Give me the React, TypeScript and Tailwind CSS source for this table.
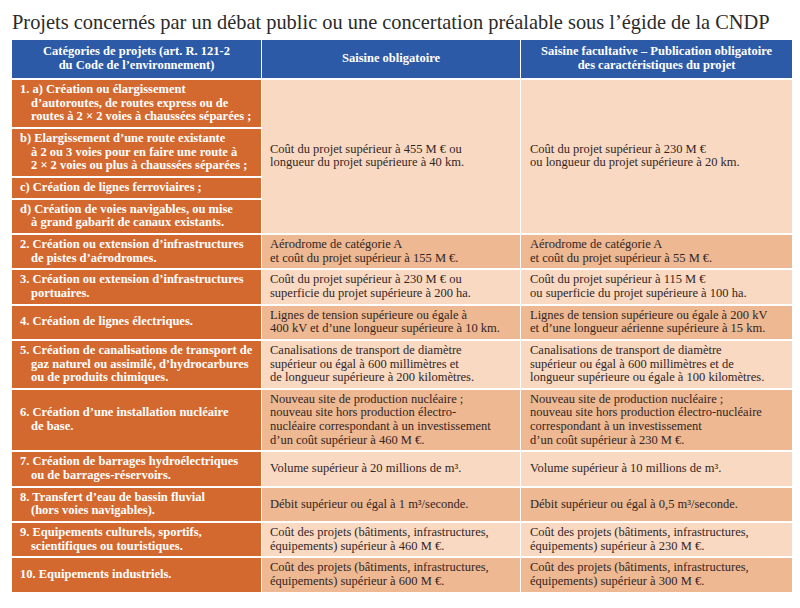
const font = { fontFamily: '"Liberation Serif", "DejaVu Serif", serif' };

type Row = { cat: string[]; oblig: string[]; facult: string[]; dark: boolean };

const subRows: string[][] = [
  ["1. a) Création ou élargissement", "d’autoroutes, de routes express ou de", "routes à 2 × 2 voies à chaussées séparées ;"],
  ["b) Elargissement d’une route existante", "à 2 ou 3 voies pour en faire une route à", "2 × 2 voies ou plus à chaussées séparées ;"],
  ["c) Création de lignes ferroviaires ;"],
  ["d) Création de voies navigables, ou mise", "à grand gabarit de canaux existants."],
];

const rows: Row[] = [
  {
    cat: ["2. Création ou extension d’infrastructures", "de pistes d’aérodromes."],
    oblig: ["Aérodrome de catégorie A", "et coût du projet supérieur à 155 M €."],
    facult: ["Aérodrome de catégorie A", "et coût du projet supérieur à 55 M €."],
    dark: true,
  },
  {
    cat: ["3. Création ou extension d’infrastructures", "portuaires."],
    oblig: ["Coût du projet supérieur à 230 M € ou", "superficie du projet supérieure à 200 ha."],
    facult: ["Coût du projet supérieur à 115 M €", "ou superficie du projet supérieure à 100 ha."],
    dark: false,
  },
  {
    cat: ["4. Création de lignes électriques."],
    oblig: ["Lignes de tension supérieure ou égale à", "400 kV et d’une longueur supérieure à 10 km."],
    facult: ["Lignes de tension supérieure ou égale à 200 kV", "et d’une longueur aérienne supérieure à 15 km."],
    dark: true,
  },
  {
    cat: ["5. Création de canalisations de transport de", "gaz naturel ou assimilé, d’hydrocarbures", "ou de produits chimiques."],
    oblig: ["Canalisations de transport de diamètre", "supérieur ou égal à 600 millimètres et", "de longueur supérieure à 200 kilomètres."],
    facult: ["Canalisations de transport de diamètre", "supérieur ou égal à 600 millimètres et de", "longueur supérieure ou égale à 100 kilomètres."],
    dark: false,
  },
  {
    cat: ["6. Création d’une installation nucléaire", "de base."],
    oblig: ["Nouveau site de production nucléaire ;", "nouveau site hors production électro-", "nucléaire correspondant à un investissement", "d’un coût supérieur à 460 M €."],
    facult: ["Nouveau site de production nucléaire ;", "nouveau site hors production électro-nucléaire", "correspondant à un investissement", "d’un coût supérieur à 230 M €."],
    dark: true,
  },
  {
    cat: ["7. Création de barrages hydroélectriques", "ou de barrages-réservoirs."],
    oblig: ["Volume supérieur à 20 millions de m³."],
    facult: ["Volume supérieur à 10 millions de m³."],
    dark: false,
  },
  {
    cat: ["8. Transfert d’eau de bassin fluvial", "(hors voies navigables)."],
    oblig: ["Débit supérieur ou égal à 1 m³/seconde."],
    facult: ["Débit supérieur ou égal à 0,5 m³/seconde."],
    dark: true,
  },
  {
    cat: ["9. Equipements culturels, sportifs,", "scientifiques ou touristiques."],
    oblig: ["Coût des projets (bâtiments, infrastructures,", "équipements) supérieur à 460 M €."],
    facult: ["Coût des projets (bâtiments, infrastructures,", "équipements) supérieur à 230 M €."],
    dark: false,
  },
  {
    cat: ["10. Equipements industriels."],
    oblig: ["Coût des projets (bâtiments, infrastructures,", "équipements) supérieur à 600 M €."],
    facult: ["Coût des projets (bâtiments, infrastructures,", "équipements) supérieur à 300 M €."],
    dark: true,
  },
];

function CatCell({ lines }: { lines: string[] }) {
  return (
    <div className="flex flex-col justify-center bg-[#d4692f] py-[3px] pl-[8px] pr-1 font-bold text-white">
      {lines.map((l, i) => (
        <div key={i} className={i > 0 ? "whitespace-nowrap pl-[11px]" : "whitespace-nowrap"}>
          {l}
        </div>
      ))}
    </div>
  );
}

function Cell({ lines, dark, pad = "pl-[8px]" }: { lines: string[]; dark: boolean; pad?: string }) {
  return (
    <div
      className={`flex flex-col justify-center py-[3px] pr-1 text-[#33261f] ${pad} ${
        dark ? "bg-[#edb892]" : "bg-[#f9d9c2]"
      }`}
    >
      {lines.map((l, i) => (
        <div key={i} className="whitespace-nowrap">
          {l}
        </div>
      ))}
    </div>
  );
}

export default function App() {
  return (
    <div className="h-[608px] w-[800px] overflow-hidden bg-white px-[12px] pt-[10px]" style={font}>
      {/* Title */}
      <h1 className="mb-[5px] whitespace-nowrap text-[20.4px] leading-[25px] text-[#2b2b2b]">
        Projets concernés par un débat public ou une concertation préalable sous l’égide de la CNDP
      </h1>

      {/* Table */}
      <div className="grid w-[780px] grid-cols-[249px_258px_271px] gap-x-px gap-y-[2px] bg-white text-[12.5px] leading-[13.65px]">
        <div className="flex h-[38px] flex-col items-center justify-center bg-[#2c5aa6] text-center font-bold text-white">
          <div>Catégories de projets (art. R. 121-2</div>
          <div>du Code de l’environnement)</div>
        </div>
        <div className="flex h-[38px] items-center justify-center bg-[#2c5aa6] font-bold text-white">
          Saisine obligatoire
        </div>
        <div className="flex h-[38px] flex-col items-center justify-center bg-[#2c5aa6] text-center font-bold text-white">
          <div>Saisine facultative – Publication obligatoire</div>
          <div>des caractéristiques du projet</div>
        </div>

        {/* Row 1 with four sub-categories */}
        <div className="col-start-1 row-span-4 grid grid-rows-subgrid gap-y-[2px]">
          {subRows.map((s, i) => (
            <CatCell key={i} lines={s} />
          ))}
        </div>
        <div className="row-span-4 grid">
          <Cell
            lines={["Coût du projet supérieur à 455 M € ou", "longueur du projet supérieure à 40 km."]}
            dark={false}
          />
        </div>
        <div className="row-span-4 grid">
          <Cell
            lines={["Coût du projet supérieur à 230 M €", "ou longueur du projet supérieure à 20 km."]}
            dark={false}
            pad="pl-[9px]"
          />
        </div>

        {rows.map((r, i) => (
          <div key={i} className="contents">
            <CatCell lines={r.cat} />
            <Cell lines={r.oblig} dark={r.dark} />
            <Cell lines={r.facult} dark={r.dark} pad="pl-[9px]" />
          </div>
        ))}
      </div>
    </div>
  );
}
